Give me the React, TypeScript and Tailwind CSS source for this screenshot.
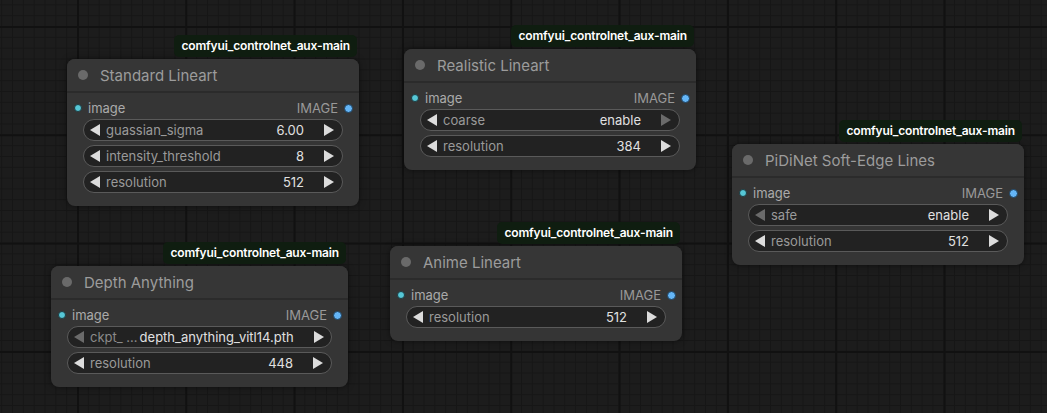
import React from "react";

type W = {
  label: string;
  value: string;
  leftDim?: boolean;
  rightDim?: boolean;
  labelDim?: boolean;
};

type N = {
  title: string;
  x: number;
  y: number;
  w: number;
  widgets: W[];
};

const nodes: N[] = [
  {
    title: "Standard Lineart",
    x: 67,
    y: 59,
    w: 292,
    widgets: [
      { label: "guassian_sigma", value: "6.00" },
      { label: "intensity_threshold", value: "8" },
      { label: "resolution", value: "512" },
    ],
  },
  {
    title: "Realistic Lineart",
    x: 404,
    y: 49,
    w: 292,
    widgets: [
      { label: "coarse", value: "enable", rightDim: true },
      { label: "resolution", value: "384" },
    ],
  },
  {
    title: "PiDiNet Soft-Edge Lines",
    x: 732,
    y: 144,
    w: 292,
    widgets: [
      { label: "safe", value: "enable", leftDim: true },
      { label: "resolution", value: "512" },
    ],
  },
  {
    title: "Depth Anything",
    x: 51,
    y: 266,
    w: 297,
    widgets: [
      { label: "ckpt_ …", value: "depth_anything_vitl14.pth", leftDim: true, labelDim: true },
      { label: "resolution", value: "448" },
    ],
  },
  {
    title: "Anime Lineart",
    x: 390,
    y: 246,
    w: 292,
    widgets: [{ label: "resolution", value: "512" }],
  },
];

function Arrow({ dir, dim }: { dir: "l" | "r"; dim?: boolean }) {
  return (
    <svg width="10" height="12" viewBox="0 0 10 12" className="shrink-0">
      {dir === "l" ? (
        <polygon points="10,0 10,12 0,6" fill={dim ? "#6a6a6a" : "#dcdcdc"} />
      ) : (
        <polygon points="0,0 0,12 10,6" fill={dim ? "#6a6a6a" : "#dcdcdc"} />
      )}
    </svg>
  );
}

function Widget({ w }: { w: W }) {
  return (
    <div className="flex h-[22px] items-center rounded-full border border-[#5a5a5a] bg-[#222222] pl-[6px] pr-[8px] text-[13px] leading-[16px]">
      <Arrow dir="l" dim={w.leftDim} />
      <span
        className={
          "ml-[6px] mr-[2px] shrink-0 whitespace-nowrap " +
          (w.labelDim ? "text-[#8a8a8a]" : "text-[#9a9a9a]")
        }
      >
        {w.label}
      </span>
      <span className="ml-auto mr-[20px] shrink-0 whitespace-nowrap text-[#e0e0e0]">{w.value}</span>
      <Arrow dir="r" dim={w.rightDim} />
    </div>
  );
}

function Node({ n }: { n: N }) {
  return (
    <div className="absolute" style={{ left: n.x, top: n.y, width: n.w }}>
      <div className="absolute bottom-[calc(100%+2px)] right-[2px] flex h-[22px] items-center rounded-[5px] bg-[#0f1d10] px-[7px] text-[12px] font-semibold leading-none tracking-[-0.15px] text-white">
        comfyui_controlnet_aux-main
      </div>
      <div className="overflow-hidden rounded-[8px] bg-[#353535] shadow-[0_0_6px_rgba(0,0,0,0.5)]">
        <div className="flex h-[34px] items-center border-b-2 border-[#2b2b2b] bg-[#363636] pl-[11px]">
          <div className="h-[10px] w-[10px] rounded-full bg-[#6a6a6a]" />
          <div className="ml-[12px] text-[15px] leading-none text-[#9c9c9c]">{n.title}</div>
        </div>
        <div className="flex h-[26px] items-center pl-[7px] pr-[6px] pt-[4px] text-[13px] leading-none">
          <div className="h-[8px] w-[8px] rounded-full border border-[#1c3a40] bg-[#56c7d6]" />
          <span className="ml-[6px] text-[#aaaaaa]">image</span>
          <span className="ml-auto text-[#999999]">IMAGE</span>
          <div className="ml-[6px] h-[9px] w-[9px] rounded-full border border-[#1d3f5c] bg-[#64b5f6]" />
        </div>
        <div className="flex flex-col gap-[4px] px-[16px] pb-[13px]">
          {n.widgets.map((w, i) => (
            <Widget key={i} w={w} />
          ))}
        </div>
      </div>
    </div>
  );
}

export default function App() {
  return (
    <div
      className="relative h-[413px] w-[1047px] overflow-hidden bg-[#1c1c1c] [background-image:linear-gradient(#111111_2px,transparent_2px),linear-gradient(90deg,#111111_2px,transparent_2px),linear-gradient(#161616_1px,transparent_1px),linear-gradient(90deg,#161616_1px,transparent_1px)] [background-size:108.33px_108.33px,108.33px_108.33px,10.833px_10.833px,10.833px_10.833px] [background-position:77px_26px]"
      style={{ fontFamily: "Inter, 'Liberation Sans', Arial, sans-serif" }}
    >
      {nodes.map((n, i) => (
        <Node key={i} n={n} />
      ))}
    </div>
  );
}
